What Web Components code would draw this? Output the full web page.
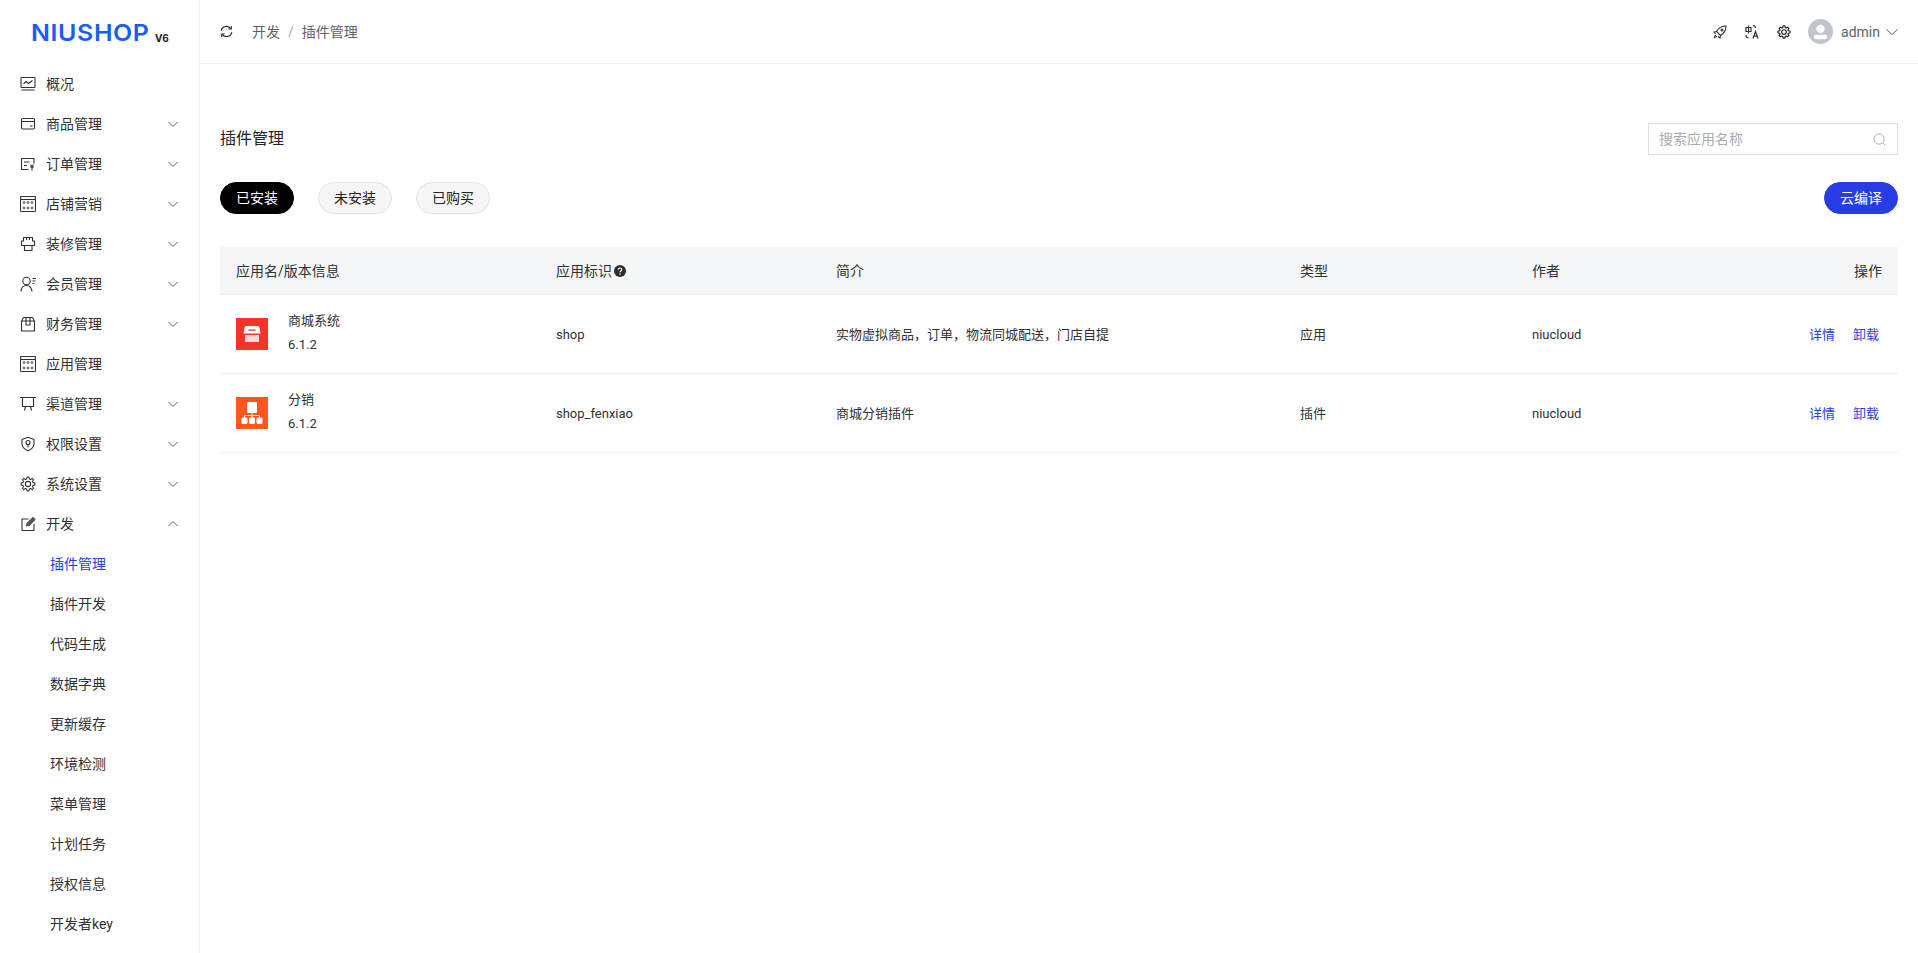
<!DOCTYPE html>
<html lang="zh">
<head>
<meta charset="utf-8">
<title>插件管理</title>
<style>
  html, body { margin: 0; height: 100%; overflow: hidden; background: #fff; }
  body { font-family: Roboto, "Noto Sans CJK SC", sans-serif; font-size: 14px; line-height: 20px; color: #303133; }
  app-shell { height: 100vh; }
</style>
</head>
<body>
<app-shell>
  <app-sidebar slot="side"></app-sidebar>
  <app-topbar slot="top"></app-topbar>
  <plugin-page></plugin-page>
</app-shell>

<script>
const FONT = 'Roboto, "Noto Sans CJK SC", sans-serif';

// gear outline with 8 teeth, centred on 8,8
function gearPath() {
  const pts = [];
  for (let i = 0; i < 8; i++) {
    const a = i * Math.PI / 4;
    [[-0.27, 5.2], [-0.14, 7], [0.14, 7], [0.27, 5.2]].forEach(p => {
      pts.push((8 + p[1] * Math.sin(a + p[0])).toFixed(2) + ' ' + (8 - p[1] * Math.cos(a + p[0])).toFixed(2));
    });
  }
  return 'M' + pts.join('L') + 'z';
}

// sidebar icons, all in a 16x16 box
const ICONS = {
  overview: '<rect x="1" y="1.5" width="14" height="10" rx=".8"/><path d="M3.5 8 6 5.500l2.500 2L12.500 4.500M1.500 14h13"/>',
  goods: '<rect x="1.500" y="2.500" width="13" height="10.500" rx="1.200"/><path d="M1.500 5.500h13M10 10h2.500"/>',
  order: '<path d="M14 7.500V2.500H1.500V13.500H8.500"/><path d="M4 6h5.500M4 9.500h3M10.500 8.500l1.500 2 1.500-2M10 11h4M12 10.500V14.500"/>',
  market: '<rect x=".5" y=".5" width="15" height="15" rx="1"/><path d="M.5 3.500h15"/><g stroke-width=".8"><circle cx="4" cy="6.500" r="1"/><circle cx="8" cy="6.500" r="1"/><circle cx="12" cy="6.500" r="1"/><circle cx="4" cy="12" r="1"/><circle cx="8" cy="12" r="1"/><circle cx="12" cy="12" r="1"/></g>',
  decorate: '<path d="M3.500 5V1.500h9V5h2v4.500H12v5H4.500v-5H1.500V5z"/><path d="M6.500 1.500v2.500M9.500 1.500v2.500M4.500 9.500h7.500"/>',
  member: '<circle cx="6.500" cy="5" r="3.700"/><path d="M1 15.500c.3-3.700 2.500-6 5.500-6s5 2.300 5.500 6M12.500 2.500h3.500M12.500 5h3M12.500 7.500h2"/>',
  finance: '<path d="M1.500 5 3.500 1.500h9L14.500 5v10h-13zM1.500 5h13M6 1.500V9h4V1.500"/>',
  channel: '<rect x="2.500" y="1.500" width="11" height="9"/><path d="M0 1.500h16M5.500 10.500 4.500 14.500M10.500 10.500l1 4"/>',
  auth: '<path d="M8 1.200 14 3.400V8c0 3-2.400 5.200-6 6.800C4.400 13.200 2 11 2 8V3.400z"/><circle cx="8" cy="6.500" r="2"/><path d="M8 8.500v3"/>',
  system: `<path d="${gearPath()}"/><circle cx="8" cy="8" r="2.600"/>`,
  dev: '<path d="M14 8v6.500H2V3h6.500"/><path d="M6.500 10 7 7.500l6-6 2 2-6 6z" fill="#555" stroke="#555"/>'
};

function icon(name) {
  return `<svg viewBox="0 0 16 16" width="16" height="16" fill="none" stroke="currentColor" stroke-width="1.100" stroke-linejoin="round">${ICONS[name]}</svg>`;
}

class AppShell extends HTMLElement {
  constructor() {
    super();
    this.attachShadow({ mode: 'open' });
    this.shadowRoot.innerHTML = `
      <style>
        :host { display: grid; grid-template-columns: 200px 1fr; grid-template-rows: 64px 1fr; }
        .side { grid-row: 1 / 3; min-height: 0; overflow: hidden; }
        .main { min-width: 0; overflow: hidden; }
      </style>
      <div class="side"><slot name="side"></slot></div>
      <slot name="top"></slot>
      <div class="main"><slot></slot></div>
    `;
  }
}

class NavItem extends HTMLElement {
  constructor() {
    super();
    this.attachShadow({ mode: 'open' });
    const name = this.getAttribute('icon');
    const arrow = this.getAttribute('arrow'); // down, up or nothing
    const sub = this.hasAttribute('sub');
    this.shadowRoot.innerHTML = `
      <style>
        :host { display: flex; align-items: center; height: 40px; padding-left: 20px; padding-right: 20px; color: #303133; font-size: 14px; box-sizing: border-box; }
        :host([sub]) { padding-left: 50px; }
        :host([active]) { color: #273ce2; }
        .ico { width: 16px; height: 16px; margin-right: 10px; flex: none; color: #303133; }
        .label { flex: 1; }
        .arrow { width: 12px; height: 12px; flex: none; color: #606266; }
        .arrow.up { transform: rotate(180deg); }
        svg { display: block; }
      </style>
      ${sub ? '' : `<span class="ico">${icon(name)}</span>`}
      <span class="label"><slot></slot></span>
      ${arrow ? `<svg class="arrow ${arrow}" viewBox="0 0 12 12" fill="none" stroke="currentColor"><path d="M1.500 4l4.500 4.500L10.500 4"/></svg>` : ''}
    `;
  }
}

class AppSidebar extends HTMLElement {
  constructor() {
    super();
    this.attachShadow({ mode: 'open' });
    const top = [
      ['overview', '概况', ''], ['goods', '商品管理', 'down'], ['order', '订单管理', 'down'],
      ['market', '店铺营销', 'down'], ['decorate', '装修管理', 'down'], ['member', '会员管理', 'down'],
      ['finance', '财务管理', 'down'], ['market', '应用管理', ''], ['channel', '渠道管理', 'down'],
      ['auth', '权限设置', 'down'], ['system', '系统设置', 'down'], ['dev', '开发', 'up']
    ];
    const subs = ['插件管理', '插件开发', '代码生成', '数据字典', '更新缓存', '环境检测', '菜单管理', '计划任务', '授权信息', '开发者key'];
    this.shadowRoot.innerHTML = `
      <style>
        :host { display: block; height: 100%; box-sizing: border-box; border-right: 1px solid #f0f1f6; font-family: ${FONT}; overflow: hidden; }
        .logo { height: 64px; display: flex; align-items: center; padding-left: 31px; }
        .word { font: 600 23.500px/1 Inter, sans-serif; color: #1a5cf5; letter-spacing: .6px; transform: scaleX(1.060); transform-origin: left center; width: 122px; white-space: nowrap; padding-top: 2px; }
        .ver { font: 700 10px/1 Inter, sans-serif; color: #222; margin-left: 2px; margin-top: 11px; }
      </style>
      <div class="logo"><span class="word">NIUSHOP</span><span class="ver">V6</span></div>
      ${top.map(t => `<nav-item icon="${t[0]}" ${t[2] ? `arrow="${t[2]}"` : ''}>${t[1]}</nav-item>`).join('')}
      ${subs.map((s, i) => `<nav-item sub ${i === 0 ? 'active' : ''}>${s}</nav-item>`).join('')}
    `;
  }
}

class AppTopbar extends HTMLElement {
  constructor() {
    super();
    this.attachShadow({ mode: 'open' });
    this.shadowRoot.innerHTML = `
      <style>
        :host { display: flex; align-items: center; height: 64px; box-sizing: border-box; border-bottom: 1px solid #eceef8; padding: 0 20px; font-family: ${FONT}; font-size: 14px; color: #606266; }
        svg { display: block; flex: none; }
        .crumb { margin-left: 19px; display: flex; gap: 8px; flex: 1; }
        .sep { color: #a8abb2; }
        .tools { display: flex; align-items: center; }
        .tools .t { margin-right: 18px; color: #303133; }
        .avatar { width: 25px; height: 25px; margin-left: -1px; margin-right: 8px; }
        .name { margin-right: 6px; color: #606266; }
      </style>
      <svg width="13" height="13" viewBox="0 0 14 14" fill="none" stroke="#222" stroke-width="1.300">
        <path d="M1.300 6.200A5.800 5.800 0 0 1 11.800 4M12.700 7.800A5.800 5.800 0 0 1 2.200 10"/>
        <path d="M12.200 1v3.200H9M1.800 13V9.800H5" stroke-width="1.100"/>
      </svg>
      <div class="crumb"><span>开发</span><span class="sep">/</span><span>插件管理</span></div>
      <div class="tools">
        <svg class="t" width="14" height="14" viewBox="0 0 14 14" fill="none" stroke="currentColor" stroke-width="1.100">
          <path d="M3.500 6.500C5.500 3 8.500 1 13 1c0 4.500-2 7.500-5.500 9.500zM3.500 6.500 1 7l1.500 2M7.500 10.500 7 13l-2-1.500M3 10c-1 .5-1.500 1.500-1.500 2.500 1 0 2-.5 2.500-1.500"/><circle cx="9" cy="5" r="1"/>
        </svg>
        <svg class="t" width="14" height="14" viewBox="0 0 14 14" fill="none" stroke="currentColor" stroke-width="1.200">
          <path d="M1 2.500h5v4H1zM3.500 .5v8M1 10c0 1.700 1 3 2.500 3M8 .5c1.500 0 2.500.8 2.500 2.500M8 13.500l2.500-7 2.500 7M8.800 11.200h3.400"/>
        </svg>
        <svg class="t" width="14" height="14" viewBox="0 0 16 16" fill="none" stroke="#222" stroke-width="1.300" stroke-linejoin="round">${ICONS.system}</svg>
        <svg class="avatar" viewBox="0 0 24 24">
          <circle cx="12" cy="12" r="12" fill="#c0c4cc"/>
          <circle cx="12" cy="9.500" r="4" fill="#fff"/>
          <rect x="5.500" y="15" width="13" height="4.500" rx="2.200" fill="#fff"/>
        </svg>
        <span class="name">admin</span>
        <svg width="12" height="12" viewBox="0 0 12 12" fill="none" stroke="#606266"><path d="M.5 3.500 6 8.500l5.500-5"/></svg>
      </div>
    `;
  }
}

class PillButton extends HTMLElement {
  constructor() {
    super();
    this.attachShadow({ mode: 'open' });
    this.shadowRoot.innerHTML = `
      <style>
        :host { display: inline-flex; align-items: center; justify-content: center; width: 74px; height: 32px; box-sizing: border-box; border-radius: 16px; border: 1px solid #e4e4e4; background: #f6f6f6; color: #222; font-size: 14px; }
        :host([dark]) { background: #000; border-color: #000; color: #fff; }
        :host([primary]) { background: #273ce2; border-color: #273ce2; color: #fff; }
      </style>
      <slot></slot>
    `;
  }
}

class SearchBox extends HTMLElement {
  constructor() {
    super();
    this.attachShadow({ mode: 'open' });
    this.shadowRoot.innerHTML = `
      <style>
        :host { display: flex; align-items: center; width: 250px; height: 32px; box-sizing: border-box; border: 1px solid #dcdfe6; padding: 0 11px 0 10px; color: #a8abb2; font-size: 14px; }
        span { flex: 1; }
        svg { display: block; }
      </style>
      <span><slot></slot></span>
      <svg width="13" height="13" viewBox="0 0 14 14" fill="none" stroke="#a8abb2"><circle cx="6.500" cy="6.500" r="5.500"/><path d="M10.500 10.500 13 13"/></svg>
    `;
  }
}

class AppIcon extends HTMLElement {
  constructor() {
    super();
    this.attachShadow({ mode: 'open' });
    const kind = this.getAttribute('kind');
    const art = kind === 'shop'
      ? `<path d="M10.500 8h11c1 0 1.400.5 1.700 1.200L24.500 15.500h-17L8.800 9.200C9.100 8.500 9.500 8 10.500 8z" fill="#fff"/>
         <rect x="12.500" y="11.500" width="7" height="1.300" fill="#f7342a"/>
         <path d="M9 17h14v7H9z" fill="#fdd9d6"/>`
      : `<rect x="11" y="5" width="10" height="11" rx="1.200" fill="#fff"/>
         <path d="M16 15v5M8.500 21v-2.500h15V21M16 18.500V21" stroke="#fff" fill="none"/>
         <rect x="5.500" y="20.500" width="6" height="6.500" rx="1.200" fill="#fff"/>
         <rect x="13" y="20.500" width="6" height="6.500" rx="1.200" fill="#fff"/>
         <rect x="20.500" y="20.500" width="6" height="6.500" rx="1.200" fill="#fff"/>`;
    this.shadowRoot.innerHTML = `
      <style>
        :host { display: block; width: 32px; height: 32px; flex: none; }
        svg { display: block; }
      </style>
      <svg width="32" height="32" viewBox="0 0 32 32">
        <rect width="32" height="32" fill="${kind === 'shop' ? '#f7342a' : '#ff5620'}"/>
        ${art}
      </svg>
    `;
  }
}

class PluginRow extends HTMLElement {
  constructor() {
    super();
    this.attachShadow({ mode: 'open' });
    const a = n => this.getAttribute(n);
    this.shadowRoot.innerHTML = `
      <style>
        :host { display: grid; grid-template-columns: 320px 280px 464px 232px 1fr; align-items: center; height: 78.500px; box-sizing: border-box; border-bottom: 1px solid #ebeef5; font-size: 13px; color: #303133; }
        :host(:last-of-type) { height: 79px; }
        .c { padding: 2px 16px 0; }
        .app { display: flex; align-items: center; padding-top: 0; }
        .meta { margin-left: 20px; padding-bottom: 2px; }
        .meta div { line-height: 13px; }
        .meta div + div { margin-top: 11px; }
        .end { display: flex; align-items: center; justify-content: space-between; padding-right: 19px; }
        .ops { display: flex; gap: 18px; color: #273ce2; }
      </style>
      <div class="c app">
        <app-icon kind="${a('kind')}"></app-icon>
        <div class="meta"><div>${a('name')}</div><div>${a('version')}</div></div>
      </div>
      <div class="c">${a('key')}</div>
      <div class="c">${a('desc')}</div>
      <div class="c">${a('type')}</div>
      <div class="c end"><span>${a('author')}</span><span class="ops"><span>详情</span><span>卸载</span></span></div>
    `;
  }
}

class PluginTable extends HTMLElement {
  constructor() {
    super();
    this.attachShadow({ mode: 'open' });
    this.shadowRoot.innerHTML = `
      <style>
        :host { display: block; font-size: 14px; color: #303133; }
        .head { display: grid; grid-template-columns: 320px 280px 464px 232px 1fr; align-items: center; height: 48px; box-sizing: border-box; background: #f5f6f8; border-bottom: 1px solid #ebeef5; }
        .c { padding: 0 16px; display: flex; align-items: center; }
        .q { width: 12px; height: 12px; margin-left: 2px; }
        .last { justify-content: space-between; }
      </style>
      <div class="head">
        <div class="c">应用名/版本信息</div>
        <div class="c">应用标识
          <svg class="q" viewBox="0 0 12 12"><circle cx="6" cy="6" r="6" fill="#2b2b2b"/><path d="M4.300 4.700C4.300 3.700 5 3 6 3s1.800.6 1.800 1.600c0 1.300-1.800 1.300-1.800 2.600" fill="none" stroke="#fff" stroke-width="1.200"/><circle cx="6" cy="9" r=".8" fill="#fff"/></svg>
        </div>
        <div class="c">简介</div>
        <div class="c">类型</div>
        <div class="c last"><span>作者</span><span>操作</span></div>
      </div>
      <slot></slot>
    `;
  }
}

class PluginPage extends HTMLElement {
  constructor() {
    super();
    this.attachShadow({ mode: 'open' });
    this.shadowRoot.innerHTML = `
      <style>
        :host { display: block; padding: 59px 20px 0; font-family: ${FONT}; }
        .title { display: flex; justify-content: space-between; align-items: center; height: 32px; font-size: 16px; line-height: 24px; color: #222; }
        .title search-box { line-height: 20px; }
        .bar { display: flex; align-items: center; gap: 24px; margin-top: 27px; margin-bottom: 33px; }
        .grow { flex: 1; }
      </style>
      <div class="title"><span>插件管理</span><search-box>搜索应用名称</search-box></div>
      <div class="bar">
        <pill-button dark>已安装</pill-button>
        <pill-button>未安装</pill-button>
        <pill-button>已购买</pill-button>
        <span class="grow"></span>
        <pill-button primary>云编译</pill-button>
      </div>
      <plugin-table>
        <plugin-row kind="shop" name="商城系统" version="6.1.2" key="shop" desc="实物虚拟商品，订单，物流同城配送，门店自提" type="应用" author="niucloud"></plugin-row>
        <plugin-row kind="fx" name="分销" version="6.1.2" key="shop_fenxiao" desc="商城分销插件" type="插件" author="niucloud"></plugin-row>
      </plugin-table>
    `;
  }
}

customElements.define('app-shell', AppShell);
customElements.define('nav-item', NavItem);
customElements.define('app-sidebar', AppSidebar);
customElements.define('app-topbar', AppTopbar);
customElements.define('pill-button', PillButton);
customElements.define('search-box', SearchBox);
customElements.define('app-icon', AppIcon);
customElements.define('plugin-row', PluginRow);
customElements.define('plugin-table', PluginTable);
customElements.define('plugin-page', PluginPage);
</script>
</body>
</html>
